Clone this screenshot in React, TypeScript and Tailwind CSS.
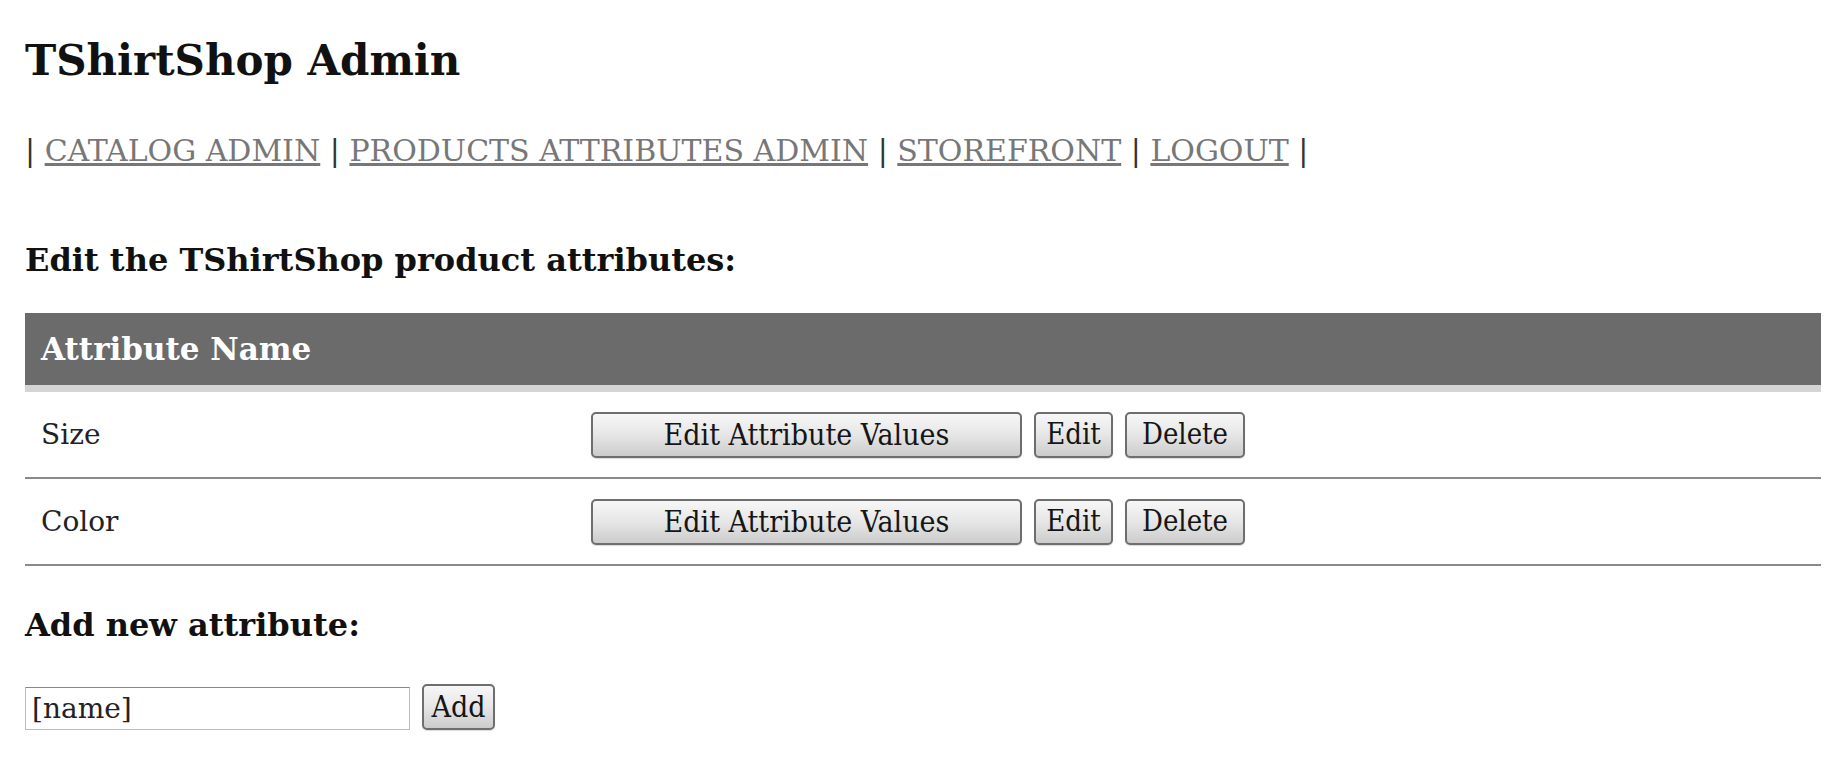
import React from "react";

const serif = { fontFamily: '"DejaVu Serif", "Liberation Serif", serif' };

function Btn({ label, w, size = "text-[29px]" }: { label: string; w: string; size?: string }) {
  return (
    <button
      className={`${w} ${size} h-[46px] rounded-[5px] border-2 border-[#6e6e6e] bg-gradient-to-b from-[#f7f7f7] via-[#e6e6e6] to-[#cccccc] text-[#151515] flex items-center justify-center leading-none shadow-[0_1px_1px_rgba(0,0,0,0.15)]`}
      style={{ fontFamily: '"DejaVu Serif Condensed", "Liberation Serif", serif' }}
    >
      {label}
    </button>
  );
}

function Row({ name }: { name: string }) {
  return (
    <div className="grid grid-cols-[566px_1fr] items-center h-[87px] border-b-2 border-[#8a8a8a]">
      <div className="pl-[16px] text-[28px] text-[#222]">{name}</div>
      <div className="flex items-center gap-[12px]">
        <Btn label="Edit Attribute Values" w="w-[431px]" size="text-[30px]" />
        <Btn label="Edit" w="w-[79px]" />
        <Btn label="Delete" w="w-[120px]" />
      </div>
    </div>
  );
}

export default function App() {
  return (
    <div className="w-[1848px] h-[782px] bg-white px-[25px] text-[#222]" style={serif}>
      <div className="h-[100px] flex items-center pt-[22px]">
        <h1 className="text-[42px] font-bold text-[#111] leading-none">TShirtShop Admin</h1>
      </div>
      <div className="h-[100px] flex items-center text-[30px] text-[#333] whitespace-pre">
        <span>| </span>
        <a className="underline text-[#777]">CATALOG ADMIN</a>
        <span> | </span>
        <a className="underline text-[#777]">PRODUCTS ATTRIBUTES ADMIN</a>
        <span> | </span>
        <a className="underline text-[#777]">STOREFRONT</a>
        <span> | </span>
        <a className="underline text-[#777]">LOGOUT</a>
        <span> |</span>
      </div>
      <div className="h-[113px] flex items-center pt-[6px]">
        <h2 className="text-[32px] font-bold text-[#111]">Edit the TShirtShop product attributes:</h2>
      </div>
      <div className="mr-[2px]">
        <div className="h-[72px] bg-[#6b6b6b] flex items-center pl-[16px] border-b-[7px] border-[#d4d4d4] box-content">
          <span className="text-[31px] font-bold text-white">Attribute Name</span>
        </div>
        <Row name="Size" />
        <Row name="Color" />
      </div>
      <div className="h-[118px] flex items-center">
        <h2 className="text-[32px] font-bold text-[#111]">Add new attribute:</h2>
      </div>
      <div className="flex items-start gap-[12px]">
        <input
          defaultValue="[name]"
          className="mt-[3px] w-[385px] h-[43px] border border-[#bbb] border-t-[#888] px-[6px] text-[28px] text-[#222] outline-none"
          style={serif}
        />
        <Btn label="Add" w="w-[73px]" size="text-[30px]" />
      </div>
    </div>
  );
}
